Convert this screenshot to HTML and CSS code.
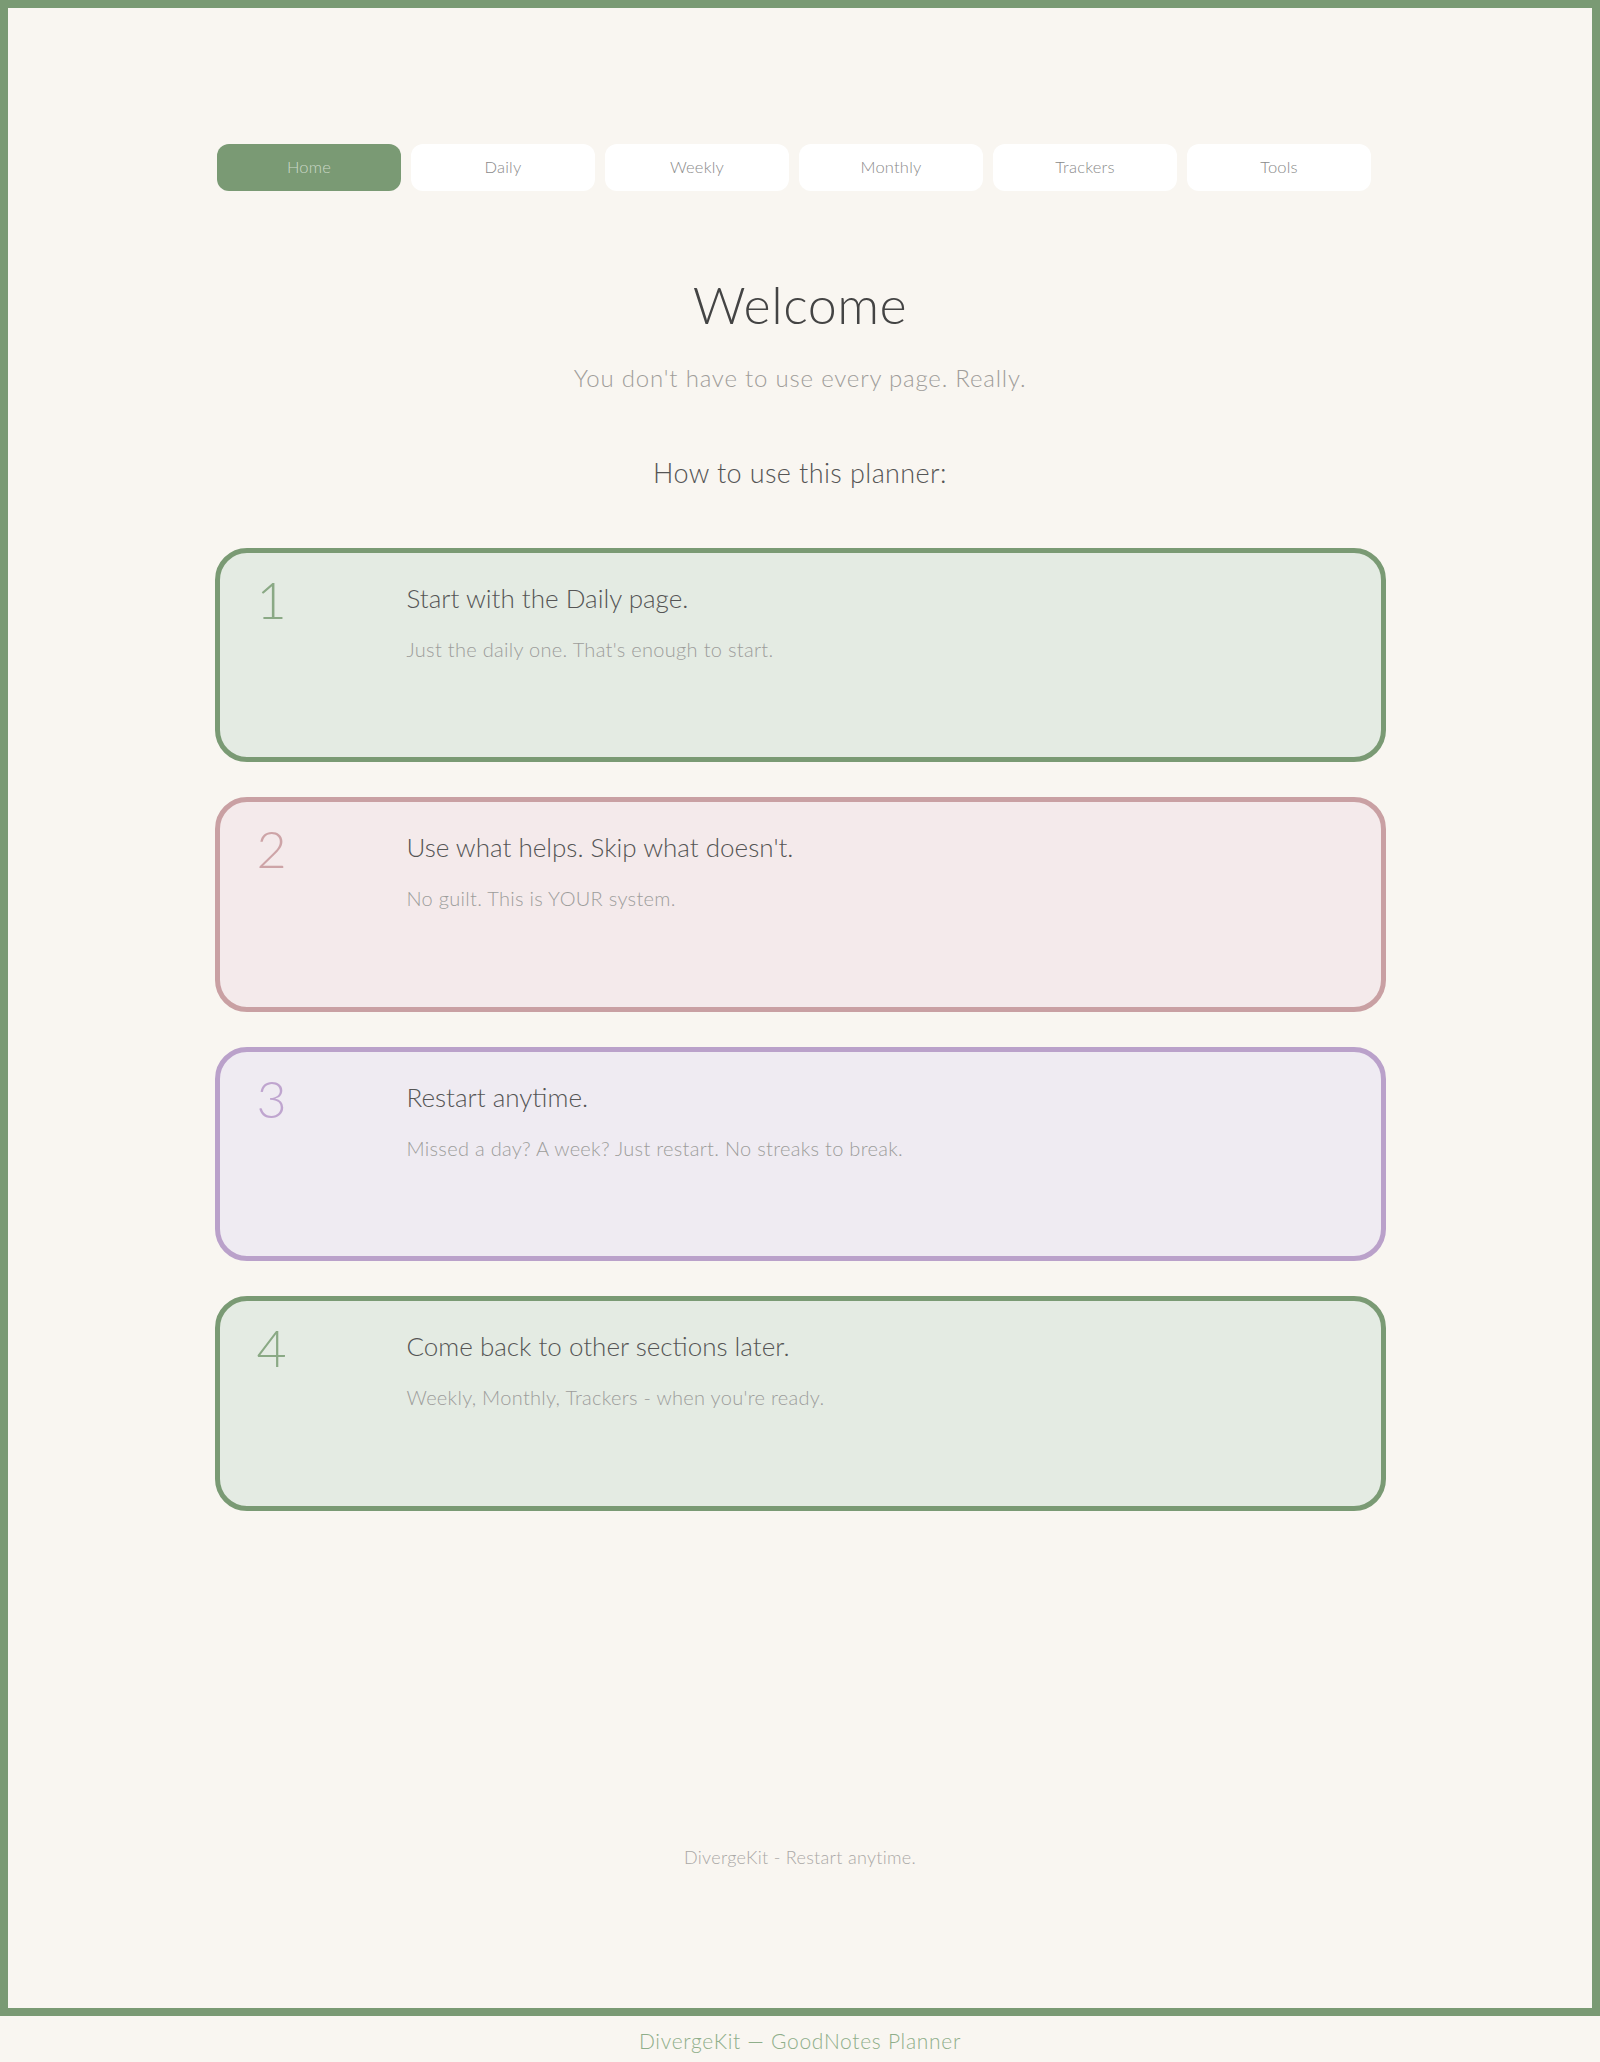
FILE: index.html
```html
<!DOCTYPE html>
<html lang="en">
<head>
<meta charset="utf-8">
<title>DivergeKit — Home</title>
<link rel="stylesheet" href="styles.css">
</head>
<body>
<div class="page">
  <nav class="nav">
    <a class="nav-btn active">Home</a>
    <a class="nav-btn">Daily</a>
    <a class="nav-btn">Weekly</a>
    <a class="nav-btn">Monthly</a>
    <a class="nav-btn">Trackers</a>
    <a class="nav-btn">Tools</a>
  </nav>

  <h1 class="title">Welcome</h1>
  <p class="subtitle">You don't have to use every page. Really.</p>
  <h2 class="howto">How to use this planner:</h2>

  <div class="steps">
    <div class="step green">
      <div class="num">1</div>
      <div class="body">
        <div class="step-title">Start with the Daily page.</div>
        <div class="step-desc">Just the daily one. That's enough to start.</div>
      </div>
    </div>
    <div class="step pink">
      <div class="num">2</div>
      <div class="body">
        <div class="step-title">Use what helps. Skip what doesn't.</div>
        <div class="step-desc">No guilt. This is YOUR system.</div>
      </div>
    </div>
    <div class="step purple">
      <div class="num">3</div>
      <div class="body">
        <div class="step-title">Restart anytime.</div>
        <div class="step-desc">Missed a day? A week? Just restart. No streaks to break.</div>
      </div>
    </div>
    <div class="step green">
      <div class="num">4</div>
      <div class="body">
        <div class="step-title">Come back to other sections later.</div>
        <div class="step-desc">Weekly, Monthly, Trackers - when you're ready.</div>
      </div>
    </div>
  </div>

  <div class="page-footer">DivergeKit - Restart anytime.</div>
</div>
<div class="caption">DivergeKit — GoodNotes Planner</div>
</body>
</html>
```
FILE: styles.css
```css
* { box-sizing: border-box; }

html, body {
  margin: 0;
  padding: 0;
  background: #f9f6f1;
  font-family: "Lato", "Noto Sans", sans-serif;
  font-weight: 300;
  line-height: 1.2;
}

.page {
  width: 1600px;
  height: 2016px;
  border: 8px solid #7a9a74;
  padding: 136px 0 139px;
  display: flex;
  flex-direction: column;
  align-items: center;
}

.nav {
  width: 1170px;
  display: flex;
  gap: 10px;
  padding-left: 2px;
}

.nav-btn {
  width: 184px;
  height: 47px;
  border-radius: 12px;
  background: #ffffff;
  color: #8a8a8a;
  font-size: 16.5px;
  letter-spacing: 0.2px;
  display: flex;
  align-items: center;
  justify-content: center;
}

.nav-btn.active {
  background: #7a9a74;
  color: #cbd8c7;
}

.title {
  margin: 82px 0 0;
  font-size: 52px;
  font-weight: 300;
  letter-spacing: 0.5px;
  color: #444;
}

.subtitle {
  margin: 29px 0 0;
  font-size: 24px;
  letter-spacing: 0.8px;
  color: #a09d9a;
}

.howto {
  margin: 64px 0 0;
  font-size: 27px;
  font-weight: 300;
  letter-spacing: 0.4px;
  color: #555;
}

.steps {
  margin-top: 58px;
  width: 1171px;
  display: flex;
  flex-direction: column;
  gap: 35px;
}

.step {
  min-height: 214.5px;
  border: 5px solid;
  border-radius: 32px;
  padding: 30px 40px;
  display: flex;
  align-items: flex-start;
}

.step.green { background: #e4ebe3; border-color: #7a9a74; }
.step.pink { background: #f4eaeb; border-color: #c9a0a3; }
.step.purple { background: #efebf2; border-color: #baa1ca; }

.num {
  flex: 0 0 150px;
  margin-top: -10px;
  margin-left: -3px;
  font-size: 52px;
  font-weight: 300;
  line-height: 1;
}

.green .num { color: #8aa985; }
.pink .num { color: #cda4a7; }
.purple .num { color: #bfa5cf; }

.step-title {
  font-size: 26px;
  color: #555;
}

.step-desc {
  margin-top: 23px;
  font-size: 20px;
  letter-spacing: 0.3px;
  color: #9d9d9b;
}

.page-footer {
  margin-top: auto;
  font-size: 18px;
  letter-spacing: 0.3px;
  color: #aaa8a6;
}

.caption {
  margin-top: 12px;
  text-align: center;
  font-size: 21px;
  letter-spacing: 0.7px;
  color: #8fae8a;
}
```
